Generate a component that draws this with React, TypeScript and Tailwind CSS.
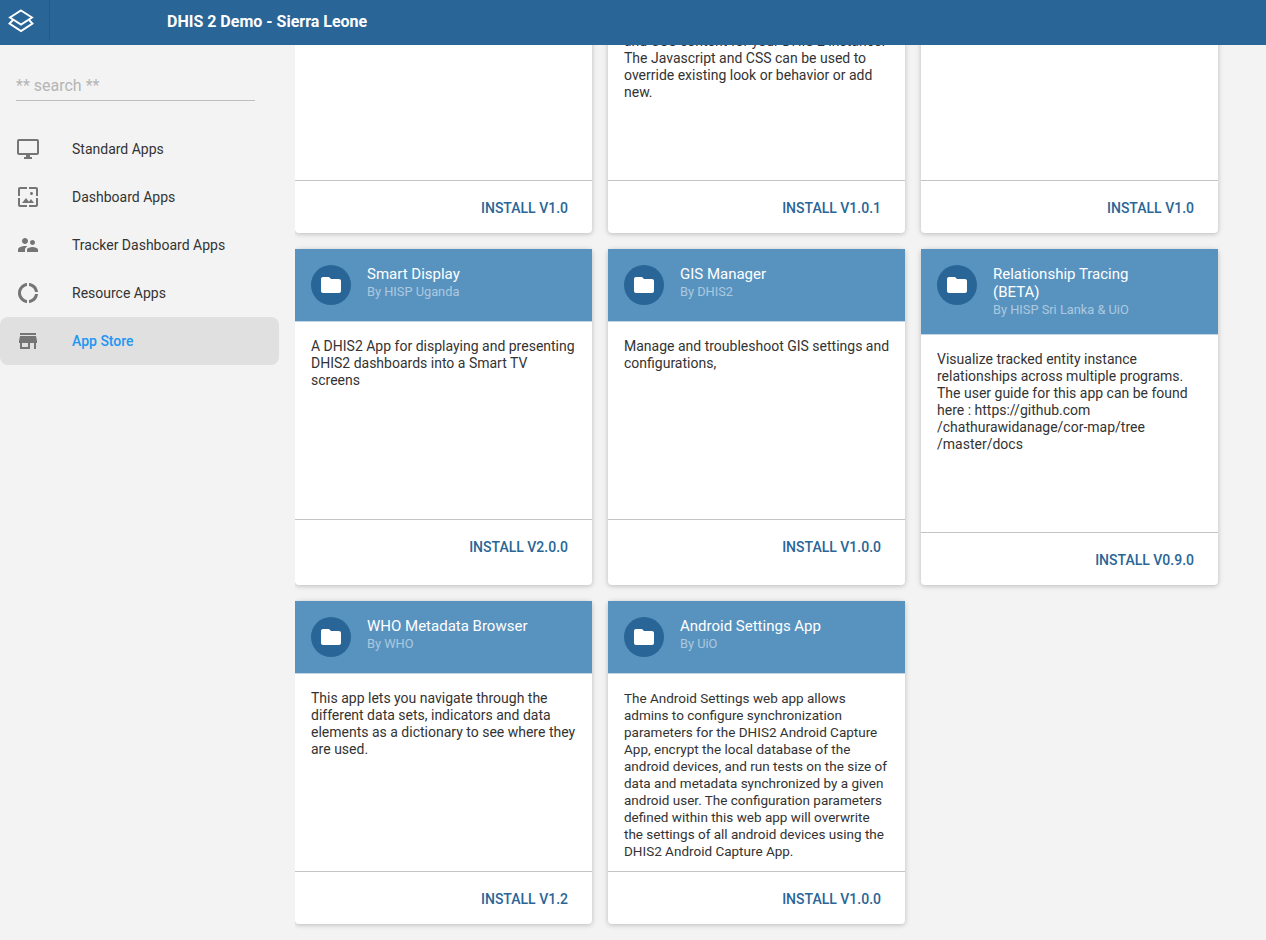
const ICONS = {
  desktop: 'M21 2H3c-1.1 0-2 .9-2 2v12c0 1.1.9 2 2 2h7v2H8v2h8v-2h-2v-2h7c1.1 0 2-.9 2-2V4c0-1.1-.9-2-2-2zm0 14H3V4h18v12z',
  wallpaper: 'M4 4h7V2H4c-1.1 0-2 .9-2 2v7h2V4zm6 9l-4 5h12l-3-4-2.03 2.71L10 13zm7-4.5c0-.83-.67-1.5-1.5-1.5S14 7.67 14 8.5s.67 1.5 1.5 1.5S17 9.33 17 8.5zM20 2h-7v2h7v7h2V4c0-1.1-.9-2-2-2zm0 18h-7v2h7c1.1 0 2-.9 2-2v-7h-2v7zM4 13H2v7c0 1.1.9 2 2 2h7v-2H4v-7z',
  people: 'M16.5 12c1.38 0 2.49-1.12 2.49-2.5S17.88 7 16.5 7C15.12 7 14 8.12 14 9.5s1.12 2.5 2.5 2.5zM9 11c1.66 0 2.99-1.34 2.99-3S10.66 5 9 5C7.34 5 6 6.34 6 8s1.34 3 3 3zm7.5 3c-1.83 0-5.5.92-5.5 2.75V19h11v-2.25c0-1.83-3.67-2.75-5.5-2.75zM9 13c-2.33 0-7 1.17-7 3.5V19h7v-2.25c0-.85.33-2.34 2.37-3.47C10.5 13.1 9.66 13 9 13z',
  donut: 'M11 5.08V2c-5 .5-9 4.81-9 10s4 9.5 9 10v-3.08c-3-.48-6-3.4-6-6.92s3-6.44 6-6.92zM18.97 11H22c-.47-5-4-8.53-9-9v3.08C16 5.51 18.54 8 18.97 11zM13 18.92V22c5-.47 8.53-4 9-9h-3.03c-.43 3-2.97 5.49-5.97 5.92z',
  store: 'M20 4H4v2h16V4zm1 10v-2l-1-5H4l-1 5v2h1v6h10v-6h4v6h2v-6h1zm-9 4H6v-4h6v4z',
  folder: 'M10 4H4c-1.1 0-1.99.9-1.99 2L2 18c0 1.1.9 2 2 2h16c1.1 0 2-.9 2-2V8c0-1.1-.9-2-2-2h-8l-2-2z',
};

type IconName = keyof typeof ICONS;

function Icon({ name, className }: { name: IconName; className?: string }) {
  return (
    <svg viewBox="0 0 24 24" fill="currentColor" className={className}>
      <path d={ICONS[name]} />
    </svg>
  );
}

const NAV: { icon: IconName; label: string; active?: boolean }[] = [
  { icon: 'desktop', label: 'Standard Apps' },
  { icon: 'wallpaper', label: 'Dashboard Apps' },
  { icon: 'people', label: 'Tracker Dashboard Apps' },
  { icon: 'donut', label: 'Resource Apps' },
  { icon: 'store', label: 'App Store', active: true },
];

function Logo() {
  return (
    <svg viewBox="0 0 26 24" fill="none" stroke="white" strokeWidth="1.9" className="h-6 w-[26px]">
      <path d="M13 1.5 L24 8.5 L13 15.5 L2 8.5 Z" />
      <path d="M5 11 L1.5 14.5 L13 22 L24.5 14.5 L21 11" />
    </svg>
  );
}

function Sidebar() {
  return (
    <aside className="w-[295px] shrink-0 pr-4">
      <div className="ml-4 mr-6 mt-7 h-7 border-b border-[#bdbdbd] text-base leading-[26px] text-[#b5b5b5]">** search **</div>
      <nav className="mt-6 flex flex-col">
        {NAV.map((item) => (
          <div key={item.label} className={`flex h-12 items-center rounded-lg ${item.active ? 'bg-[#e0e0e0]' : ''}`}>
            <Icon name={item.icon} className="ml-4 h-6 w-6 text-[#757575]" />
            <span className={`ml-8 text-sm ${item.active ? 'font-medium text-[#2196f3]' : 'text-[#333333]'}`}>{item.label}</span>
          </div>
        ))}
      </nav>
    </aside>
  );
}

interface AppCardProps {
  title?: string;
  author?: string;
  description?: string;
  version: string;
  small?: boolean;
  topClass?: string;
}

function AppCard({ title, author, description, version, small, topClass }: AppCardProps) {
  return (
    <div className="flex flex-col rounded-sm bg-white shadow-[0_1px_6px_rgba(0,0,0,0.12),0_1px_4px_rgba(0,0,0,0.12)]">
      {title ? (
        <div className="flex items-start bg-[#5893c0] p-4 pr-10">
          <div className="flex h-10 w-10 shrink-0 items-center justify-center rounded-full bg-[#296596]">
            <Icon name="folder" className="h-6 w-6 text-white" />
          </div>
          <div className="ml-4">
            <div className="text-[15px] leading-[18px] text-white">{title}</div>
            <div className="text-[12.8px] leading-[17px] text-white/50">{author}</div>
          </div>
        </div>
      ) : null}
      <div className={`h-[199px] border-y border-b-[#c4c4c4] border-t-[#c4d6e4] pl-4 ${topClass ?? 'pt-4'} ${small ? 'pr-4 text-[13.5px]' : 'pr-[15px] text-sm'} leading-[17px] text-[#333333]`}>
        {description}
      </div>
      <div className="h-[52px] pr-6 pt-[18px] text-right text-sm font-medium leading-[19px] text-[#296596]">INSTALL {version}</div>
    </div>
  );
}

export default function App() {
  return (
    <div className="flex h-[940px] flex-col overflow-hidden bg-[#f3f3f3] font-['Roboto',sans-serif]">
      <header className="flex h-[45px] shrink-0 items-center bg-[#296596]">
        <div className="flex h-[41px] w-[50px] items-center self-start border-r border-[#245a86] pl-2">
          <Logo />
        </div>
        <div className="mb-0.5 ml-[117px] text-base font-bold text-white">DHIS 2 Demo - Sierra Leone</div>
      </header>
      <div className="flex min-h-0 flex-1">
        <Sidebar />
        <main className="flex min-h-0 flex-1 flex-col justify-end overflow-hidden pb-4">
          <div className="grid grid-cols-[297px_297px_297px] gap-4">
            <AppCard version="V1.0" />
            <AppCard
              version="V1.0.1"
              topClass="pt-[50px]"
              description="and CSS content for your DHIS 2 instance. The Javascript and CSS can be used to override existing look or behavior or add new."
            />
            <AppCard version="V1.0" />
            <AppCard title="Smart Display" author="By HISP Uganda" version="V2.0.0" description="A DHIS2 App for displaying and presenting DHIS2 dashboards into a Smart TV screens" />
            <AppCard title="GIS Manager" author="By DHIS2" version="V1.0.0" description="Manage and troubleshoot GIS settings and configurations," />
            <AppCard
              title="Relationship Tracing (BETA)"
              author="By HISP Sri Lanka & UiO"
              version="V0.9.0"
              description="Visualize tracked entity instance relationships across multiple programs. The user guide for this app can be found here : https://github.com /chathurawidanage/cor-map/tree /master/docs"
            />
            <AppCard title="WHO Metadata Browser" author="By WHO" version="V1.2" description="This app lets you navigate through the different data sets, indicators and data elements as a dictionary to see where they are used." />
            <AppCard
              title="Android Settings App"
              author="By UiO"
              version="V1.0.0"
              small
              description="The Android Settings web app allows admins to configure synchronization parameters for the DHIS2 Android Capture App, encrypt the local database of the android devices, and run tests on the size of data and metadata synchronized by a given android user. The configuration parameters defined within this web app will overwrite the settings of all android devices using the DHIS2 Android Capture App."
            />
          </div>
        </main>
      </div>
    </div>
  );
}
